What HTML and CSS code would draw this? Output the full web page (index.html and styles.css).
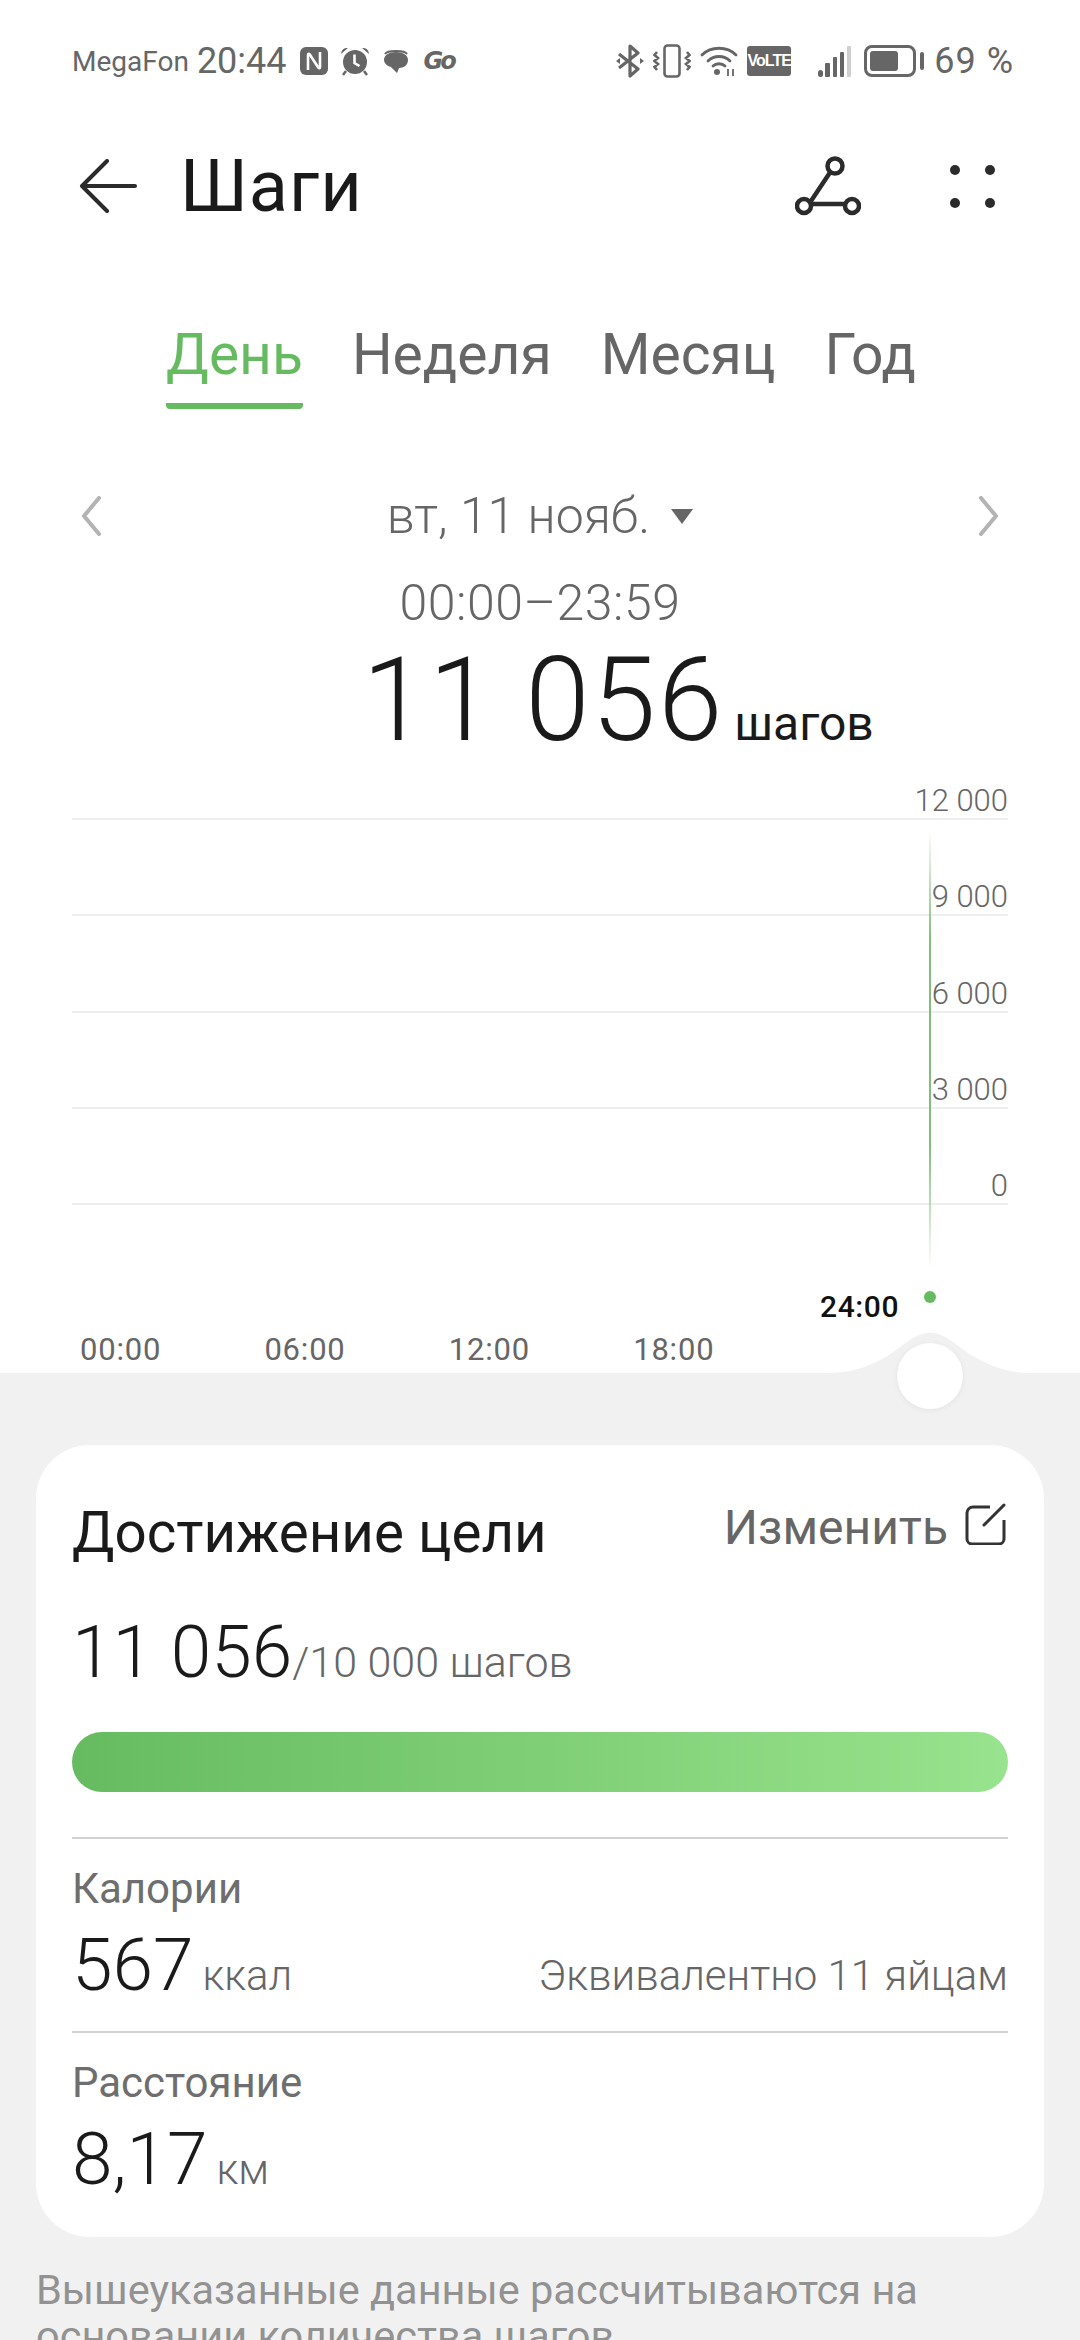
FILE: index.html
```html
<!DOCTYPE html>
<html lang="ru">
<head>
    <meta charset="UTF-8">
    <meta name="viewport" content="width=device-width, initial-scale=1.0">
    <title>Шаги</title>
    <link rel="stylesheet" href="styles.css">
</head>
<body>
    <div class="screen">
        <div class="top">
            <div class="status-bar">
                <div class="status-side">
                    <span class="carrier">MegaFon</span>
                    <span class="clock">20:44</span>
                    <svg width="28" height="28" viewBox="0 0 28 28"><rect width="28" height="28" rx="6" fill="#666"/><path d="M8 23V8c0-1.500 1-1.500 1.800-.4L18.200 20.400c.8 1.100 1.800 1 1.800-.4V5" fill="none" stroke="#fff" stroke-width="2.600"/></svg>
                    <svg width="30" height="30" viewBox="0 0 30 30"><circle cx="15" cy="16" r="12" fill="#666"/><path d="M1 8a6 6 0 0 1 7-6zM29 8a6 6 0 0 0-7-6z" fill="#666"/><path d="M6 25l-3 4M24 25l3 4" stroke="#666" stroke-width="2.500"/><path d="M14.500 8.500V17l5 3" fill="none" stroke="#fff" stroke-width="2.600"/></svg>
                    <svg width="28" height="28" viewBox="0 0 28 28"><path d="M3 7c2-4 20-4 22 0" fill="none" stroke="#666" stroke-width="1.800"/><path d="M14 5c7 0 12 3 12 8s-4 8-9 8l-2 5-6-6c-4-1-7-4-7-7 0-5 5-8 12-8z" fill="#666"/></svg>
                    <span class="go">Go</span>
                </div>
                <div class="status-side right">
                    <svg width="28" height="34" viewBox="0 0 28 34"><path d="M3 10l19 15-8 7V2l8 7L3 24" fill="none" stroke="#666" stroke-width="3.200" stroke-linejoin="round"/><path d="M0 17l4-3v6zM28 17l-4-3v6z" fill="#666"/></svg>
                    <svg width="38" height="34" viewBox="0 0 38 34"><rect x="11.500" y="1.500" width="15" height="31" rx="3" fill="none" stroke="#666" stroke-width="2.600"/><path d="M4 8L1.500 11 5 14l-3.500 3L5 20l-3.500 3L4 26M34 8l2.500 3L33 14l3.500 3L33 20l3.500 3L34 26" fill="none" stroke="#666" stroke-width="2.600"/></svg>
                    <svg width="38" height="32" viewBox="0 0 38 32"><path d="M2 10c9-9 25-9 34 0M8 16c6-6 16-6 22 0M13 21c3-3 9-3 12 0" fill="none" stroke="#666" stroke-width="2.800" stroke-linecap="round"/><circle cx="17" cy="27" r="3" fill="#666"/><path d="M28 24v7M33 24v7" stroke="#666" stroke-width="1.800"/></svg>
                    <span class="volte">VoLTE</span>
                    <svg class="signal" width="33" height="31" viewBox="0 0 33 31"><rect x="0" y="24" width="5" height="7" rx="2.500" fill="#666"/><rect x="7" y="17" width="5" height="14" rx="1" fill="#666"/><rect x="15" y="11" width="4" height="20" rx="1" fill="#666"/><rect x="22" y="6" width="4" height="25" rx="1" fill="#666"/><rect x="29" y="0" width="4" height="31" rx="1" fill="#cfcfcf"/></svg>
                    <div class="battery"><span class="battery-fill"></span></div>
                    <span class="percent">69 %</span>
                </div>
            </div>

            <div class="app-bar">
                <svg class="back" width="58" height="54" viewBox="0 0 58 54"><path d="M28 2L3 27l25 25M3 27h53" fill="none" stroke="#2b2b2b" stroke-width="4" stroke-linecap="round" stroke-linejoin="round"/></svg>
                <h1 class="title">Шаги</h1>
                <svg class="share" width="66" height="62" viewBox="0 0 66 62"><path d="M38 13L16 46M16 49h44" stroke="#2b2b2b" stroke-width="4.500"/><circle cx="40" cy="11" r="7.500" fill="#fff" stroke="#2b2b2b" stroke-width="4.500"/><circle cx="9" cy="51" r="7" fill="#fff" stroke="#2b2b2b" stroke-width="4.500"/><circle cx="57" cy="51" r="7" fill="#fff" stroke="#2b2b2b" stroke-width="4.500"/></svg>
                <div class="more">
                    <span></span><span></span><span></span><span></span>
                </div>
            </div>

            <div class="tabs">
                <span class="tab active">День</span>
                <span class="tab">Неделя</span>
                <span class="tab">Месяц</span>
                <span class="tab">Год</span>
            </div>

            <div class="date-row">
                <svg width="22" height="40" viewBox="0 0 22 40"><path d="M19 2L4 20l15 18" fill="none" stroke="#b3b3b3" stroke-width="4" stroke-linecap="round" stroke-linejoin="round"/></svg>
                <div class="date">вт, 11 нояб.<i class="caret"></i></div>
                <svg width="22" height="40" viewBox="0 0 22 40"><path d="M3 2l15 18L3 38" fill="none" stroke="#b3b3b3" stroke-width="4" stroke-linecap="round" stroke-linejoin="round"/></svg>
            </div>
            <div class="range">00:00–23:59</div>
            <div class="total"><span class="total-num">11 056</span><span class="total-unit">шагов</span></div>

            <div class="chart">
                <div class="grid-row"><span>12 000</span></div>
                <div class="grid-row"><span>9 000</span></div>
                <div class="grid-row"><span>6 000</span></div>
                <div class="grid-row"><span>3 000</span></div>
                <div class="grid-row"><span>0</span></div>
                <div class="bar-line"></div>
                <div class="bar-dot"></div>
                <div class="now">24:00</div>
            </div>
            <div class="hours">
                <span>00:00</span><span>06:00</span><span>12:00</span><span>18:00</span>
            </div>
        </div>

        <div class="bottom">
            <svg class="bump" width="206" height="40" viewBox="0 0 206 40"><path d="M0 40c24 0 42-6 62-18C80 10 88 0 103 0s23 10 41 22c20 12 38 18 62 18z" fill="#f1f1f1"/></svg>
            <div class="knob"></div>

            <div class="card">
                <div class="card-head">
                    <h2 class="card-title">Достижение цели</h2>
                    <div class="edit">Изменить
                        <svg width="42" height="42" viewBox="0 0 42 42"><path d="M26 4H9a6 6 0 0 0-6 6v26a5 5 0 0 0 5 5h27a5 5 0 0 0 5-5V17" fill="none" stroke="#333" stroke-width="3"/><path d="M40 2L20 22" stroke="#333" stroke-width="3" stroke-linecap="round"/></svg>
                    </div>
                </div>
                <div class="goal"><span class="goal-num">11 056</span><span class="goal-of">/10 000 шагов</span></div>
                <div class="progress"></div>
                <div class="stat first">
                    <div class="stat-label">Калории</div>
                    <div class="stat-line">
                        <div><span class="stat-num">567</span><span class="stat-unit">ккал</span></div>
                        <span class="stat-note">Эквивалентно 11 яйцам</span>
                    </div>
                </div>
                <div class="stat">
                    <div class="stat-label">Расстояние</div>
                    <div class="stat-line">
                        <div><span class="stat-num">8,17</span><span class="stat-unit">км</span></div>
                    </div>
                </div>
            </div>

            <p class="note">Вышеуказанные данные рассчитываются на основании количества шагов.</p>
        </div>
    </div>
</body>
</html>
```

FILE: styles.css
```css
:root {
    --green: #66bb60;
    --ink: #1a1a1a;
    --muted: #666666;
    --page: #f1f1f1;
}

* {
    box-sizing: border-box;
}

html, body {
    margin: 0;
    padding: 0;
    background-color: white;
}

body {
    font-family: Roboto, "Noto Sans", sans-serif;
    color: var(--ink);
}

.screen {
    width: 1080px;
    height: 2340px;
    overflow: hidden;
    display: flex;
    flex-direction: column;
}

.top {
    flex: none;
    height: 1373px;
    padding: 0 72px;
}

/* status bar */
.status-bar {
    height: 154px;
    padding-top: 44px;
    display: flex;
    justify-content: space-between;
    align-items: flex-start;
    color: var(--muted);
}

.status-side {
    display: flex;
    align-items: center;
    height: 34px;
    gap: 12px;
}

.status-side.right {
    margin-right: -6px;
    gap: 9px;
}

.carrier {
    font-size: 28px;
    margin-right: -4px;
}

.clock {
    font-size: 36px;
    margin-right: 1px;
}

.go {
    font-family: "DejaVu Sans", sans-serif;
    font-size: 24px;
    font-weight: 700;
    font-style: italic;
    letter-spacing: -3px;
    margin-left: 2px;
}

.volte {
    width: 44px;
    height: 30px;
    border-radius: 3px;
    background-color: var(--muted);
    color: white;
    font-family: "Liberation Sans", sans-serif;
    font-size: 16px;
    font-weight: 700;
    line-height: 30px;
    text-align: center;
    letter-spacing: -1px;
}

.signal {
    margin-left: 18px;
}

.battery {
    width: 52px;
    height: 32px;
    margin-left: 4px;
    border: 3px solid var(--muted);
    border-radius: 8px;
    padding: 3px;
    position: relative;
}

.battery::after {
    content: "";
    position: absolute;
    right: -11px;
    top: 4px;
    width: 4px;
    height: 18px;
    border-radius: 2px;
    background-color: var(--muted);
}

.battery-fill {
    display: block;
    width: 28px;
    height: 100%;
    border-radius: 3px;
    background-color: var(--muted);
}

.percent {
    font-size: 36px;
    margin-left: 9px;
    letter-spacing: 1px;
}

/* title row */
.app-bar {
    height: 64px;
    display: flex;
    align-items: center;
}

.back {
    margin-left: 7px;
}

.title {
    margin: 0 auto 0 43px;
    font-size: 72px;
    font-weight: 400;
    letter-spacing: 1px;
}

.share {
    margin-right: 89px;
}

.more {
    width: 45px;
    margin-right: 13px;
    display: grid;
    grid-template-columns: 10px 10px;
    justify-content: space-between;
    row-gap: 23px;
}

.more span {
    width: 10px;
    height: 10px;
    border-radius: 50%;
    background-color: #2b2b2b;
}

/* day / week / month / year */
.tabs {
    margin-top: 102px;
    padding-left: 2px;
    display: flex;
    justify-content: center;
    gap: 49px;
}

.tab {
    font-size: 57px;
    line-height: 70px;
    padding-bottom: 13px;
    border-bottom: 6px solid transparent;
    color: var(--muted);
}

.tab.active {
    color: var(--green);
    border-bottom-color: var(--green);
    border-radius: 0 0 4px 4px;
}

.date-row {
    margin-top: 82px;
    padding: 0 8px;
    display: flex;
    justify-content: space-between;
    align-items: center;
    height: 50px;
}

.date {
    font-size: 50px;
    font-weight: 300;
    color: var(--muted);
}

.caret {
    display: inline-block;
    width: 0;
    height: 0;
    margin-left: 21px;
    vertical-align: 9px;
    border-left: 11px solid transparent;
    border-right: 11px solid transparent;
    border-top: 15px solid var(--muted);
}

.range {
    margin-top: 34px;
    text-align: center;
    font-size: 50px;
    font-weight: 300;
    line-height: 56px;
    letter-spacing: 0.5px;
    color: var(--muted);
}

.total {
    height: 130px;
    margin-top: 4px;
    padding-left: 156px;
    display: flex;
    justify-content: center;
    align-items: baseline;
    gap: 10px;
    line-height: 130px;
}

.total-num {
    font-size: 116px;
    font-weight: 300;
    letter-spacing: 2px;
}

.total-unit {
    font-size: 48px;
}

/* hourly chart */
.chart {
    position: relative;
    height: 560px;
}

.grid-row {
    height: 96.250px;
    border-bottom: 2px solid #eeeeee;
    display: flex;
    justify-content: flex-end;
    align-items: flex-end;
}

.grid-row:first-child {
    height: 55px;
}

.grid-row span {
    margin-bottom: -3px;
    font-size: 31px;
    font-weight: 300;
    line-height: 40px;
    color: var(--muted);
}

.bar-line {
    position: absolute;
    left: 857px;
    top: 64px;
    width: 2px;
    height: 440px;
    background: linear-gradient(to bottom, rgba(102, 187, 96, 0), #7fbf7a 25%, #7fbf7a 72%, rgba(102, 187, 96, 0));
}

.bar-dot {
    position: absolute;
    left: 852px;
    top: 526px;
    width: 12px;
    height: 12px;
    border-radius: 50%;
    background-color: var(--green);
}

.now {
    position: absolute;
    left: 748px;
    top: 524px;
    font-size: 30px;
    font-weight: 500;
    letter-spacing: 0.6px;
    color: #111111;
}

.hours {
    display: grid;
    grid-template-columns: repeat(4, 184.400px);
    padding-left: 8px;
    font-size: 31px;
    line-height: 50px;
    letter-spacing: 0.8px;
    color: var(--muted);
}

/* lower sheet */
.bottom {
    flex: 1;
    position: relative;
    background-color: var(--page);
    padding: 72px 36px 0;
}

.bump {
    position: absolute;
    left: 827px;
    top: -40px;
}

.knob {
    position: absolute;
    left: 897px;
    top: -30px;
    width: 66px;
    height: 66px;
    border-radius: 50%;
    background-color: white;
    box-shadow: 0 1px 6px rgba(0, 0, 0, 0.06);
}

.card {
    height: 792px;
    border-radius: 54px;
    background-color: white;
    padding: 0 36px;
}

.card-head {
    display: flex;
    justify-content: space-between;
    padding-top: 54px;
}

.card-title {
    margin: 0;
    font-size: 56.500px;
    font-weight: 400;
    line-height: 68px;
}

.edit {
    display: flex;
    align-items: flex-start;
    gap: 16px;
    margin-right: 2px;
    font-size: 48px;
    line-height: 58px;
    color: var(--muted);
}

.edit svg {
    margin-top: 4px;
}

.goal {
    margin-top: 43px;
    line-height: 84px;
}

.goal-num {
    font-size: 73px;
    font-weight: 300;
}

.goal-of {
    font-size: 43px;
    font-weight: 300;
    color: var(--muted);
}

.progress {
    margin-top: 18px;
    height: 60px;
    border-radius: 30px;
    background: linear-gradient(to right, var(--green), #98e38d);
}

.stat {
    height: 194px;
    border-top: 2px solid #d2d2d2;
    padding-top: 22px;
}

.stat.first {
    margin-top: 45px;
}

.stat-label {
    font-size: 42px;
    line-height: 56px;
    color: #6e6e6e;
}

.stat-line {
    margin-top: 6px;
    display: flex;
    justify-content: space-between;
    align-items: baseline;
    line-height: 84px;
}

.stat-num {
    font-size: 73px;
    font-weight: 300;
}

.stat-unit {
    margin-left: 9px;
    font-size: 42px;
    font-weight: 300;
    color: var(--muted);
}

.stat-note {
    font-size: 42px;
    font-weight: 300;
    color: var(--muted);
}

.note {
    margin: 30px 0 0;
    width: 900px;
    font-size: 41.500px;
    line-height: 46px;
    color: #929292;
}
```
